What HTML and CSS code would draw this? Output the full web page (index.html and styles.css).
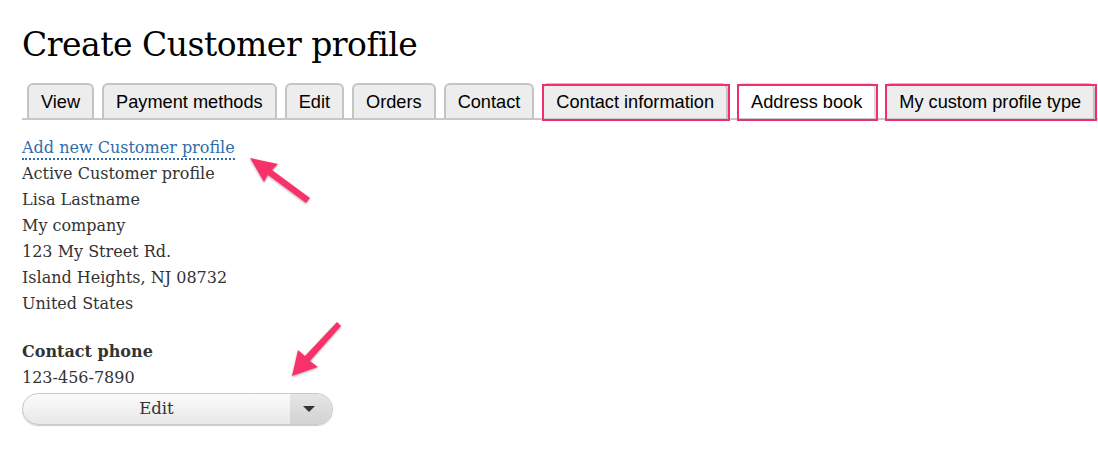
FILE: index.html
```html
<!DOCTYPE html>
<html>
<head>
<meta charset="utf-8">
<link rel="stylesheet" href="styles.css">
</head>
<body>
<div class="page">
  <h1 class="title">Create Customer profile</h1>
  <ul class="tabs">
    <li class="tab">View</li>
    <li class="tab">Payment methods</li>
    <li class="tab">Edit</li>
    <li class="tab">Orders</li>
    <li class="tab">Contact</li>
    <li class="tab mark">Contact information</li>
    <li class="tab mark active">Address book</li>
    <li class="tab mark">My custom profile type</li>
  </ul>
  <div class="content">
    <a class="add-link" href="#">Add new Customer profile</a>
    <div class="line">Active Customer profile</div>
    <div class="line">Lisa Lastname</div>
    <div class="line">My company</div>
    <div class="line">123 My Street Rd.</div>
    <div class="line">Island Heights, NJ 08732</div>
    <div class="line">United States</div>
    <div class="field">
      <div class="label">Contact phone</div>
      <div class="line">123-456-7890</div>
    </div>
    <div class="dropbutton">
      <span class="drop-main">Edit</span>
      <span class="drop-toggle"><span class="caret"></span></span>
    </div>
  </div>
  <svg class="arrow arrow-1" width="80" height="60" viewBox="0 0 80 60">
    <defs>
      <filter id="sh1" x="-20%" y="-20%" width="140%" height="140%">
        <feDropShadow dx="0" dy="1" stdDeviation="1.2" flood-color="#000" flood-opacity="0.35"/>
      </filter>
    </defs>
    <g filter="url(#sh1)">
      <path d="M2 4 L30 10 L24 16 L62 44 L58 49 L20 21 L16 28 Z" fill="#f7336b"/>
    </g>
  </svg>
  <svg class="arrow arrow-2" width="70" height="70" viewBox="0 0 70 70">
    <defs>
      <filter id="sh2" x="-20%" y="-20%" width="140%" height="140%">
        <feDropShadow dx="0" dy="1" stdDeviation="1.2" flood-color="#000" flood-opacity="0.35"/>
      </filter>
    </defs>
    <g filter="url(#sh2)">
      <path d="M4 58 L10 32 L17 38 L49 4 L53 8 L22 43 L30 49 Z" fill="#f7336b"/>
    </g>
  </svg>
</div>
</body>
</html>
```
FILE: styles.css
```css
html, body {
  margin: 0;
  padding: 0;
  background: #fff;
}
.page {
  position: relative;
  padding: 0 0 0 22px;
  width: 1076px;
  height: 454px;
  font-family: "DejaVu Serif", Georgia, serif;
  color: #333;
}
.title {
  margin: 0;
  padding-top: 24px;
  font-size: 33px;
  line-height: 42px;
  font-weight: normal;
  color: #000;
  letter-spacing: -0.5px;
}
.tabs {
  list-style: none;
  margin: 17px 0 0 0;
  padding: 0 0 0 5px;
  display: flex;
  border-bottom: 2px solid #c8c8c8;
  height: 37px;
  width: 1076px;
  box-sizing: border-box;
}
.tab {
  position: relative;
  font-family: "Liberation Sans", Arial, sans-serif;
  font-size: 18.2px;
  color: #000;
  background: #ededed;
  border: 2px solid #c4c4c4;
  border-bottom: none;
  border-radius: 6px 6px 0 0;
  padding: 0 12px;
  height: 35px;
  line-height: 35px;
  box-sizing: border-box;
  margin-right: 8px;
  white-space: nowrap;
}
.tab.mark::after {
  content: "";
  position: absolute;
  top: -1px;
  left: -2px;
  right: -4px;
  bottom: -3px;
  border: 2px solid #f0306a;
}
.tab.mark {
  margin-right: 9px;
}
.tab.active {
  background: #fff;
  border-color: #dadada;
}
.content {
  padding-top: 15px;
  font-size: 16px;
  line-height: 26px;
}
.add-link {
  display: inline-block;
  color: #2f6ea8;
  text-decoration: none;
  line-height: 20px;
  border-bottom: 2px dotted #2f6ea8;
  margin-bottom: 1px;
}
.line {
  height: 26px;
}
.field {
  margin-top: 22px;
}
.label {
  font-weight: bold;
  height: 26px;
}
.dropbutton {
  margin-top: 2px;
  width: 311px;
  height: 32px;
  display: flex;
  border-radius: 16px;
  border: 1px solid #c9c9c9;
  box-sizing: border-box;
  overflow: hidden;
  background: linear-gradient(#fbfbfb, #e8e8e8);
  box-shadow: 0 1px 1px rgba(0,0,0,0.2);
}
.drop-main {
  flex: 1;
  text-align: center;
  line-height: 30px;
  color: #333;
  font-size: 16.5px;
}
.drop-toggle {
  width: 38px;
  display: flex;
  align-items: center;
  justify-content: center;
  background: linear-gradient(#e6e6e6, #d2d2d2);
  padding-right: 4px;
}
.caret {
  width: 0;
  height: 0;
  border-left: 6px solid transparent;
  border-right: 6px solid transparent;
  border-top: 6px solid #333;
}
.arrow {
  position: absolute;
}
.arrow-1 {
  left: 248px;
  top: 154px;
}
.arrow-2 {
  left: 288px;
  top: 318px;
}
```
